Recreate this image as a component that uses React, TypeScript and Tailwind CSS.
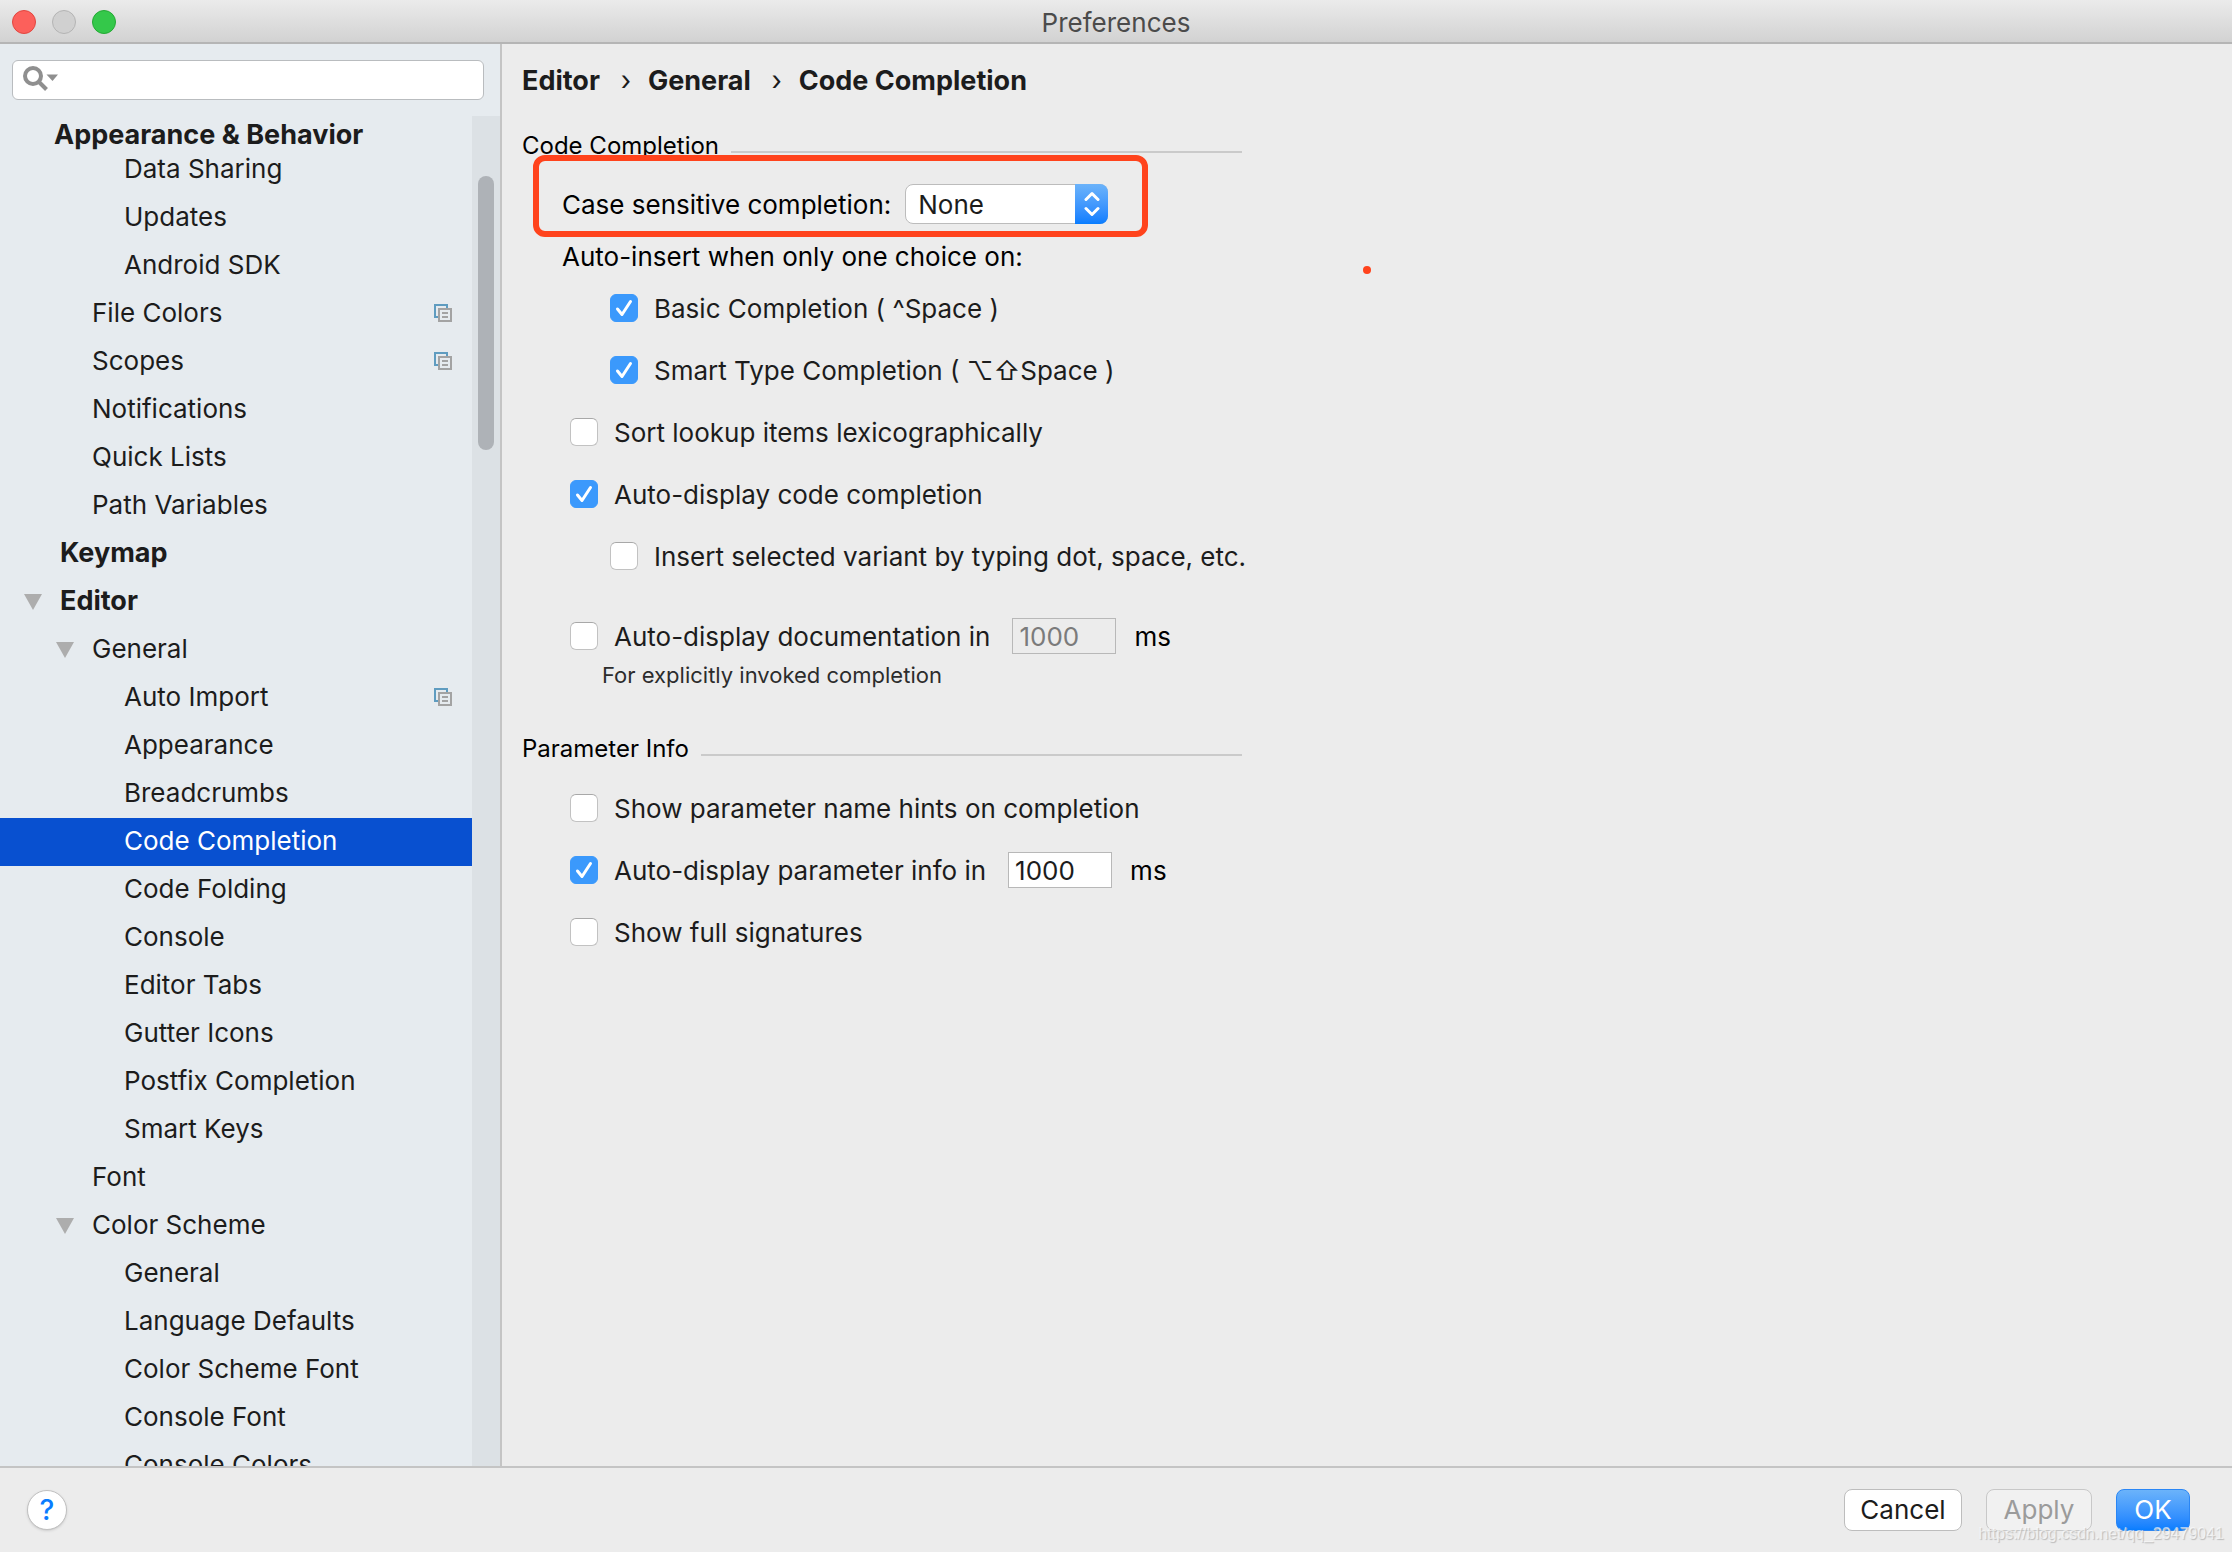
import React, { useState } from "react";
import clsx from "clsx";

type TreeItem = {
  name: string;
  level: number;
  open?: boolean;
  project?: boolean;
};

const treeItems: TreeItem[] = [
  { name: "Data Sharing", level: 2 },
  { name: "Updates", level: 2 },
  { name: "Android SDK", level: 2 },
  { name: "File Colors", level: 1, project: true },
  { name: "Scopes", level: 1, project: true },
  { name: "Notifications", level: 1 },
  { name: "Quick Lists", level: 1 },
  { name: "Path Variables", level: 1 },
  { name: "Keymap", level: 0 },
  { name: "Editor", level: 0, open: true },
  { name: "General", level: 1, open: true },
  { name: "Auto Import", level: 2, project: true },
  { name: "Appearance", level: 2 },
  { name: "Breadcrumbs", level: 2 },
  { name: "Code Completion", level: 2 },
  { name: "Code Folding", level: 2 },
  { name: "Console", level: 2 },
  { name: "Editor Tabs", level: 2 },
  { name: "Gutter Icons", level: 2 },
  { name: "Postfix Completion", level: 2 },
  { name: "Smart Keys", level: 2 },
  { name: "Font", level: 1 },
  { name: "Color Scheme", level: 1, open: true },
  { name: "General", level: 2 },
  { name: "Language Defaults", level: 2 },
  { name: "Color Scheme Font", level: 2 },
  { name: "Console Font", level: 2 },
  { name: "Console Colors", level: 2 },
];

const indents = ["pl-6", "pl-14", "pl-[88px]"];

function ProjectIcon() {
  return (
    <svg width="18" height="18" viewBox="0 0 18 18" fill="none" strokeWidth="2">
      <path d="M4 13H1V1H13V4" stroke="#5f9cc0" />
      <path d="M5 5H17V17H5Z" stroke="#a3a3a3" />
      <path d="M8 9H14M8 13H14" stroke="#a3a3a3" />
    </svg>
  );
}

function TitleBar() {
  return (
    <header className="grid h-11 shrink-0 grid-cols-[1fr_auto_1fr] items-center border-b-2 border-[#b5b5b5] bg-linear-to-b from-[#ebebeb] to-[#d2d2d2] px-3 pt-0.5">
      <div className="flex gap-4">
        <button aria-label="Close" className="size-6 rounded-full border border-[#e2463f] bg-[#fc605b]" />
        <button aria-label="Minimize" className="size-6 rounded-full border border-[#b4b4b4] bg-[#d0d0d0]" />
        <button aria-label="Zoom" className="size-6 rounded-full border border-[#24a934] bg-[#34c84a]" />
      </div>
      <h1 className="pt-0.5 text-[#4b4b4b]">Preferences</h1>
    </header>
  );
}

function Sidebar() {
  const [selected, setSelected] = useState(14);

  return (
    <aside className="flex w-[502px] shrink-0 flex-col border-r-2 border-[#c4c4c4] bg-[#e6ebef]">
      <div className="px-3 pt-4 pb-4">
        <label className="mr-1 flex h-10 items-center rounded-md border border-[#b9bcbf] bg-white pb-0.5 pl-2.5">
          <svg width="36" height="26" viewBox="0 0 36 26" fill="none">
            <circle cx="10" cy="10" r="8" stroke="#8f8f8f" strokeWidth="4" />
            <path d="M16 16L23.5 23.5" stroke="#8f8f8f" strokeWidth="4" />
            <path d="M23.5 8.5H35L29.5 15Z" fill="#8f8f8f" />
          </svg>
          <input type="text" aria-label="Search settings" className="min-w-0 flex-1 px-2 outline-none" />
        </label>
      </div>

      <div className="flex min-h-0 flex-1">
        <nav className="flex min-w-0 flex-1 flex-col overflow-hidden">
          <div className="h-[30px] shrink-0 pl-[54px] text-[27px] leading-[38px] font-bold">Appearance &amp; Behavior</div>
          <ul className="min-h-0 flex-1 overflow-hidden">
            {treeItems.map((item, i) => (
              <li key={i}>
                <button
                  onClick={() => setSelected(i)}
                  className={clsx(
                    "flex h-12 w-full items-center pr-5 pb-0.5 text-left",
                    indents[item.level],
                    item.level === 0 && "text-[27px] font-bold",
                    i === selected && "bg-[#0850d0] text-white"
                  )}
                >
                  <span className="w-9 shrink-0 pt-0.5">
                    {item.open && (
                      <svg width="18" height="16" viewBox="0 0 18 16">
                        <path d="M0 0H18L9 16Z" fill="#adadad" />
                      </svg>
                    )}
                  </span>
                  <span className="flex-1">{item.name}</span>
                  {item.project && <ProjectIcon />}
                </button>
              </li>
            ))}
          </ul>
        </nav>
        <div className="w-7 bg-[#dce1e5] px-1.5 pt-[60px]">
          <div className="h-[274px] rounded-full bg-[#aeb2b7]" />
        </div>
      </div>
    </aside>
  );
}

type CheckProps = {
  id: string;
  label: string;
  checked?: boolean;
  nested?: boolean;
  children?: React.ReactNode;
};

function Check({ id, label, checked = false, nested = false, children }: CheckProps) {
  const [on, setOn] = useState(checked);

  return (
    <div className={clsx("flex h-[62px] items-center", nested ? "pl-[88px]" : "pl-12")}>
      <span className="relative mr-4 size-7 shrink-0">
        <input
          id={id}
          type="checkbox"
          checked={on}
          onChange={(e) => setOn(e.target.checked)}
          className="block size-7 appearance-none rounded-md border border-[#c2c2c2] border-t-[#a8a8a8] bg-white checked:border-[#3b99fc] checked:bg-[#3b99fc]"
        />
        {on && (
          <svg className="pointer-events-none absolute inset-0" width="28" height="28" viewBox="0 0 28 28" fill="none">
            <path d="M7.5 15L12 20.5L20.5 7.5" stroke="white" strokeWidth="3" strokeLinecap="round" strokeLinejoin="round" />
          </svg>
        )}
      </span>
      <label htmlFor={id} className="pt-0.5">
        {label}
      </label>
      {children}
    </div>
  );
}

function Delay({ label, disabled = false }: { label: string; disabled?: boolean }) {
  return (
    <label className="ml-[22px] flex items-center gap-[18px] text-black">
      <input
        type="text"
        aria-label={label}
        defaultValue="1000"
        disabled={disabled}
        className="h-9 w-[104px] border border-[#b8b8b8] bg-white px-1.5 text-[#1c1c1c] disabled:bg-[#ececec] disabled:text-[#7b7b7b]"
      />
      <span className="pt-0.5">ms</span>
    </label>
  );
}

function SectionTitle({ children }: { children: React.ReactNode }) {
  return (
    <h2 className="flex h-8 w-[720px] items-center text-2xl text-black">
      {children}
      <span className="mt-3 ml-3 h-0.5 flex-1 bg-[#cacaca]" />
    </h2>
  );
}

function Settings() {
  return (
    <main className="relative min-w-0 flex-1 overflow-hidden pt-5 pl-5">
      <nav className="flex h-9 items-center pb-0.5 text-[27px] font-bold">
        <a href="#editor">Editor</a>
        <span className="w-12 pl-1 text-center font-normal">›</span>
        <a href="#general">General</a>
        <span className="w-12 pl-1 text-center font-normal">›</span>
        <a href="#completion">Code Completion</a>
      </nav>

      <section className="pt-[30px]">
        <SectionTitle>Code Completion</SectionTitle>
        <div className="relative mt-[22px] flex h-10 items-center pl-10 text-black">
          <label htmlFor="case" className="pt-0.5">
            Case sensitive completion:
          </label>
          <div className="relative ml-3.5">
            <select
              id="case"
              defaultValue="None"
              className="block h-10 w-[203px] appearance-none rounded-lg border border-[#bcbcbc] bg-white pt-0.5 pl-3 text-[#1c1c1c]"
            >
              <option>All</option>
              <option>None</option>
              <option>First letter</option>
            </select>
            <span className="pointer-events-none absolute top-0 right-0 flex h-10 w-[33px] items-center justify-center rounded-r-lg bg-linear-to-b from-[#6bb3fa] to-[#077dff]">
              <svg width="16" height="26" viewBox="0 0 16 26" fill="none" stroke="white" strokeWidth="3" strokeLinecap="round" strokeLinejoin="round">
                <path d="M2 8.5L8 2.5L14 8.5M2 17.5L8 23.5L14 17.5" />
              </svg>
            </span>
          </div>
          <div className="pointer-events-none absolute top-[-29px] left-[11px] h-[82px] w-[615px] rounded-xl border-6 border-[#ff431c]" />
        </div>
        <p className="mt-[15px] flex h-9 items-center pl-10 text-black">Auto-insert when only one choice on:</p>
        <div className="pt-0.5">
          <Check id="basic" label="Basic Completion ( ^Space )" checked nested />
          <Check id="smart" label="Smart Type Completion ( ⌥⇧Space )" checked nested />
          <Check id="sort" label="Sort lookup items lexicographically" />
          <Check id="auto" label="Auto-display code completion" checked />
          <Check id="insert" label="Insert selected variant by typing dot, space, etc." nested />
        </div>
        <div className="pt-[18px]">
          <Check id="docs" label="Auto-display documentation in">
            <Delay label="Documentation delay" disabled />
          </Check>
          <p className="-mt-2 pl-20 text-[22px] leading-8 text-[#2c2c2c]">For explicitly invoked completion</p>
        </div>
      </section>

      <section className="pt-[42px]">
        <SectionTitle>Parameter Info</SectionTitle>
        <div className="pt-3">
          <Check id="hints" label="Show parameter name hints on completion" />
          <Check id="params" label="Auto-display parameter info in" checked>
            <Delay label="Parameter info delay" />
          </Check>
          <Check id="signatures" label="Show full signatures" />
        </div>
      </section>

      <span className="absolute top-[222px] left-[861px] size-2 rounded-full bg-[#ff431c]" />
    </main>
  );
}

function Footer() {
  return (
    <footer className="relative flex h-[86px] shrink-0 items-center border-t-2 border-[#c4c4c4] pr-[42px] pl-[27px]">
      <button className="size-10 rounded-full border border-[#c0c0c0] bg-white text-[28px] leading-none font-medium text-[#0a7cff] shadow-sm">?</button>
      <div className="ml-auto flex gap-6">
        <button className="h-[42px] w-[118px] rounded-lg border border-[#bdbdbd] bg-white">Cancel</button>
        <button disabled className="h-[42px] w-[106px] rounded-lg border border-[#c8c8c8] bg-[#f1f1f1] text-[#9b9b9b]">Apply</button>
        <button className="h-[42px] w-[74px] rounded-lg border border-[#2a86f5] bg-linear-to-b from-[#6bb3fa] to-[#077dff] text-white">OK</button>
      </div>
      <span className="absolute right-2 bottom-2 font-['Liberation_Sans',sans-serif] text-base leading-5 text-white/60 [text-shadow:1px_1px_1px_#bbb]">
        https://blog.csdn.net/qq_29479041
      </span>
    </footer>
  );
}

export default function App() {
  return (
    <div className="flex h-screen flex-col bg-[#ececec] font-[Inter,sans-serif] text-[26px] leading-8 text-[#1c1c1c]">
      <TitleBar />
      <div className="flex min-h-0 flex-1">
        <Sidebar />
        <Settings />
      </div>
      <Footer />
    </div>
  );
}
